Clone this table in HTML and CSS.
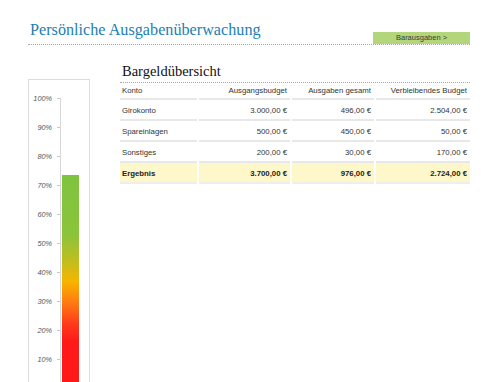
FILE: index.html
```html
<!DOCTYPE html>
<html lang="de">
<head>
<meta charset="utf-8">
<title>Persönliche Ausgabenüberwachung</title>
<link rel="stylesheet" href="styles.css">
</head>
<body>
<header class="top">
  <h1 class="title">Persönliche Ausgabenüberwachung</h1>
  <a class="btn" href="#">Barausgaben &gt;</a>
</header>
<main class="main">
  <section class="chart">
    <div class="scale">
      <span>100%</span><span>90%</span><span>80%</span><span>70%</span><span>60%</span><span>50%</span><span>40%</span><span>30%</span><span>20%</span><span>10%</span>
    </div>
    <div class="plot">
      <div class="bar" style="height: 73.4%"></div>
    </div>
  </section>
  <section class="summary">
    <h2 class="heading">Bargeldübersicht</h2>
    <div class="table">
      <div class="cell head">Konto</div>
      <div class="cell head num">Ausgangsbudget</div>
      <div class="cell head num">Ausgaben gesamt</div>
      <div class="cell head num">Verbleibendes Budget</div>

      <div class="cell">Girokonto</div>
      <div class="cell num">3.000,00 €</div>
      <div class="cell num">496,00 €</div>
      <div class="cell num">2.504,00 €</div>

      <div class="cell">Spareinlagen</div>
      <div class="cell num">500,00 €</div>
      <div class="cell num">450,00 €</div>
      <div class="cell num">50,00 €</div>

      <div class="cell">Sonstiges</div>
      <div class="cell num">200,00 €</div>
      <div class="cell num">30,00 €</div>
      <div class="cell num">170,00 €</div>

      <div class="cell total">Ergebnis</div>
      <div class="cell total num">3.700,00 €</div>
      <div class="cell total num">976,00 €</div>
      <div class="cell total num">2.724,00 €</div>
    </div>
  </section>
</main>
</body>
</html>
```
FILE: styles.css
```css
* { box-sizing: border-box; }
html, body { margin: 0; padding: 0; }
body {
  width: 498px;
  height: 382px;
  overflow: hidden;
  background: #fff;
  font-family: "Liberation Sans", Arial, sans-serif;
  color: #333;
}
.top {
  margin: 0 28px;
  height: 45px;
  display: flex;
  justify-content: space-between;
  align-items: flex-end;
  border-bottom: 1px dotted #a8a8a8;
}
.title {
  margin: 0 0 4px 2px;
  font-family: "Liberation Serif", "Times New Roman", serif;
  font-weight: normal;
  font-size: 16.2px;
  line-height: 20px;
  color: #1d7fb3;
}
.btn {
  width: 97px;
  height: 12px;
  background: #b3d67b;
  color: #3a3a3a;
  font-size: 7.5px;
  line-height: 12px;
  text-align: center;
  text-decoration: none;
}
.main {
  display: flex;
  align-items: flex-start;
  margin-left: 28px;
}
.chart {
  margin-top: 34px;
  width: 62px;
  height: 310px;
  border: 1px solid #dcdcdc;
  padding-top: 3.5px;
  display: flex;
  align-items: flex-start;
}
.scale {
  width: 31px;
  display: flex;
  flex-direction: column;
}
.scale span {
  position: relative;
  height: 29px;
  line-height: 29px;
  padding-right: 8px;
  text-align: right;
  font-size: 7.3px;
  font-style: italic;
  color: #555;
}
.scale span::after {
  content: "";
  position: absolute;
  right: 0;
  top: 14px;
  width: 3px;
  height: 1px;
  background: #c8c8c8;
}
.plot {
  margin-top: 14.5px;
  width: 29px;
  height: 290px;
  border-left: 1px solid #d8d8d8;
  display: flex;
  align-items: flex-end;
}
.bar {
  margin-left: 1px;
  width: 17px;
  background: linear-gradient(to bottom,
    #80c33f 0%, #8ac43a 28%, #c8bd1a 42%, #f8b400 50%,
    #ff7a12 60%, #ff3a1c 70%, #ff1a1a 78%, #ff1818 100%);
}
.summary {
  margin-left: 30px;
  margin-top: 17px;
  width: 350px;
}
.heading {
  margin: 0;
  height: 21px;
  font-family: "Liberation Serif", "Times New Roman", serif;
  font-weight: normal;
  font-size: 14.5px;
  line-height: 18px;
  padding-left: 2px;
  color: #111;
  border-bottom: 1px dotted #a8a8a8;
}
.table {
  display: grid;
  grid-template-columns: 77px 91px 82px 94px;
  column-gap: 2px;
}
.cell {
  height: 21px;
  display: flex;
  align-items: flex-end;
  padding: 0 3px 3px 2px;
  font-size: 7.8px;
  line-height: 10px;
  white-space: nowrap;
  border-bottom: 2px solid #e8e8e8;
}
.cell.head {
  height: 17px;
  align-items: center;
  padding-bottom: 0;
}
.num { justify-content: flex-end; }
.total {
  background: #fdf7c9;
  font-weight: bold;
  color: #222;
  border-bottom-color: #eeeeee;
}
```
